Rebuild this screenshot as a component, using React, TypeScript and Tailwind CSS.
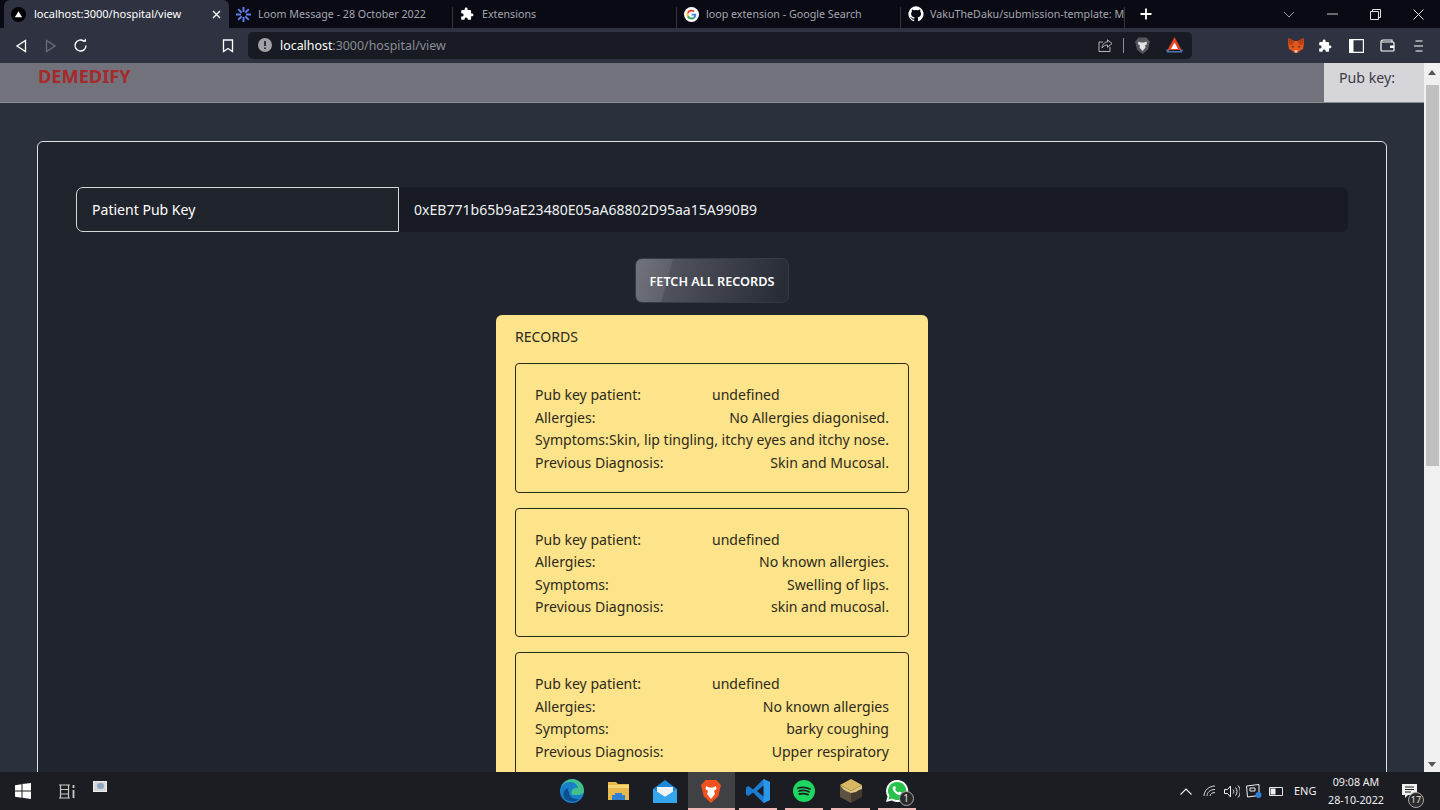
import React from "react";

const font = "font-['Noto_Sans','Open_Sans',sans-serif]";

function Tab({ icon, title, active, width, sep }: { icon: React.ReactNode; title: string; active?: boolean; width: string; sep?: boolean }) {
  return (
    <div className={`${width} h-[28px] flex items-center shrink-0 relative ${active ? "bg-[#2f3341] rounded-t-md" : ""}`}>
      <div className="w-[29px] pl-[7px] shrink-0 flex items-center">{icon}</div>
      <span className={`whitespace-nowrap overflow-hidden flex-1 ${active ? "text-[11px] pl-[1px] text-white" : "text-[10.7px] text-[#a4a7ae]"}`}>{title}</span>
      {active && <span className="w-[26px] shrink-0 flex justify-center">
        <svg width="9" height="9" viewBox="0 0 9 9" stroke="white" strokeWidth="1.4"><path d="M1 1l7 7M8 1l-7 7" /></svg>
      </span>}
      {sep && <span className="absolute right-0 top-[7px] h-[21px] w-px bg-[#34363f]" />}
    </div>
  );
}

function Record({ rows }: { rows: [string, string][] }) {
  return (
    <div className="border border-[#2c2a1c] rounded-[4px] px-[19px] pt-[20px] text-[14.05px] leading-[22.5px] text-[#2d2a1a] mb-[15px] h-[129.5px] shrink-0">
      {rows.map(([a, b], i) => (
        <div key={i} className="flex justify-between whitespace-nowrap">
          <span>{a}</span>
          {i === 0 ? <span className="w-[177px] text-left">{b}</span> : <span>{b}</span>}
        </div>
      ))}
    </div>
  );
}

function TaskIcon({ children, active, line = true }: { children: React.ReactNode; active?: boolean; line?: boolean }) {
  return (
    <div className={`w-[46.4px] h-[38px] flex items-center justify-center relative ${active ? "bg-[#3f4145]" : ""}`}>
      {children}
      {line && <span className={`absolute bottom-0 h-[2px] bg-[#f2b8b8] ${active ? "left-0 right-0" : "left-[4px] right-[4px]"}`} />}
    </div>
  );
}

const puzzle = "M20.5 11H19V7a2 2 0 0 0-2-2h-4V3.5a2.5 2.5 0 0 0-5 0V5H4a2 2 0 0 0-2 2v3.8h1.5a2.7 2.7 0 0 1 0 5.4H2V20a2 2 0 0 0 2 2h3.8v-1.5a2.7 2.7 0 0 1 5.4 0V22H17a2 2 0 0 0 2-2v-4h1.5a2.5 2.5 0 0 0 0-5z";

export default function App() {
  return (
    <div className={`w-[1440px] h-[810px] flex flex-col overflow-hidden bg-[#2a303c] ${font}`}>
      {/* Tab strip */}
      <div className="h-[28px] bg-[#0a0a14] flex items-center pl-[4px] shrink-0">
        <Tab
          active
          width="w-[225px]"
          title="localhost:3000/hospital/view"
          icon={<svg width="15" height="15" viewBox="0 0 15 15"><circle cx="7.5" cy="7.5" r="7.5" fill="#000" /><path d="M7.5 4.2l3.6 6H3.900z" fill="#fff" /></svg>}
        />
        <Tab
          width="w-[224px]"
          sep
          title="Loom Message - 28 October 2022"
          icon={<svg width="15" height="15" viewBox="0 0 15 15" fill="none" stroke="#5f80ea" strokeWidth="1.900"><path d="M7.500 0v5M7.500 10v5M0 7.500h5M10 7.500h5M2.200 2.200l3.500 3.500M9.300 9.300l3.500 3.500M12.800 2.200L9.300 5.700M5.700 9.300l-3.500 3.500" /></svg>}
        />
        <Tab
          width="w-[224px]"
          sep
          title="Extensions"
          icon={<svg width="14" height="14" viewBox="0 0 24 24" fill="#fff"><path d={puzzle} /></svg>}
        />
        <Tab
          width="w-[224px]"
          sep
          title="loop extension - Google Search"
          icon={<svg width="15" height="15" viewBox="0 0 24 24"><circle cx="12" cy="12" r="12" fill="#fff" /><path d="M19.600 12.200c0-.6 0-1.100-.2-1.600H12v3h4.300a3.700 3.700 0 0 1-1.600 2.400l2.500 2c1.500-1.400 2.400-3.400 2.400-5.800z" fill="#4285f4" /><path d="M12 20c2.200 0 4-.7 5.200-2l-2.500-2c-.7.500-1.600.8-2.700.8-2.100 0-3.900-1.400-4.500-3.300L4.900 15.500C6.200 18.200 8.900 20 12 20z" fill="#34a853" /><path d="M7.500 13.500a4.800 4.800 0 0 1 0-3L4.900 8.500a8 8 0 0 0 0 7z" fill="#fbbc05" /><path d="M12 7.200c1.200 0 2.200.4 3 1.200l2.200-2.200A8 8 0 0 0 4.900 8.500l2.600 2c.6-1.900 2.400-3.300 4.500-3.300z" fill="#ea4335" /></svg>}
        />
        <Tab
          width="w-[224px]"
          sep
          title="VakuTheDaku/submission-template: M"
          icon={<svg width="16" height="16" viewBox="0 0 24 24" fill="#fff"><path d="M12 .5a11.500 11.500 0 0 0-3.600 22.400c.6.100.8-.3.800-.6v-2c-3.200.7-3.900-1.500-3.900-1.500-.5-1.300-1.300-1.700-1.300-1.700-1-.7.100-.7.100-.7 1.200.1 1.800 1.200 1.800 1.200 1 1.800 2.700 1.300 3.400 1 .1-.8.400-1.300.7-1.600-2.600-.3-5.300-1.300-5.300-5.700 0-1.300.5-2.300 1.200-3.100-.1-.3-.5-1.500.1-3.100 0 0 1-.3 3.200 1.200a11 11 0 0 1 5.800 0c2.200-1.500 3.200-1.200 3.200-1.200.6 1.600.2 2.800.1 3.100.8.800 1.200 1.900 1.200 3.100 0 4.400-2.700 5.400-5.300 5.700.4.400.8 1 .8 2.100v3.100c0 .3.2.7.800.6A11.500 11.500 0 0 0 12 .5z" /></svg>}
        />
        <svg className="ml-[14px]" width="14" height="14" viewBox="0 0 14 14" stroke="#fff" strokeWidth="1.800"><path d="M7 1.500v11M1.500 7h11" /></svg>
        <div className="ml-auto flex items-center h-full">
          <span className="w-[42px] flex justify-center"><svg width="12" height="7" viewBox="0 0 12 7" fill="none" stroke="#9a9aa2"><path d="M1 1l5 5 5-5" /></svg></span>
          <span className="w-[44px] flex justify-center"><svg width="11" height="2" viewBox="0 0 11 2"><path d="M0 1h11" stroke="#c9c9cc" /></svg></span>
          <span className="w-[42px] flex justify-center"><svg width="11" height="11" viewBox="0 0 11 11" fill="none" stroke="#e2e2e4"><path d="M.5 2.500h8v8h-8zM2.500 2.500v-2h8v8h-2" /></svg></span>
          <span className="w-[44px] flex justify-center"><svg width="11" height="11" viewBox="0 0 11 11" stroke="#e2e2e4"><path d="M.5.500l10 10M10.500.500l-10 10" /></svg></span>
        </div>
      </div>

      {/* Toolbar */}
      <div className="h-[35px] bg-[#2f3341] flex items-center shrink-0">
        <div className="w-[248px] flex items-center h-full shrink-0 relative">
          <svg className="ml-[15px]" width="12" height="14" viewBox="0 0 12 14" fill="none" stroke="#fff" strokeWidth="1.300"><path d="M10.500 1.500v11L2 7z" /></svg>
          <svg className="ml-[18px]" width="12" height="14" viewBox="0 0 12 14" fill="none" stroke="#6b6e79" strokeWidth="1.300"><path d="M1.500 1.500v11L10 7z" /></svg>
          <svg className="ml-[16px]" width="15" height="15" viewBox="0 0 15 15" fill="none" stroke="#fff" strokeWidth="1.400"><path d="M13 7.500A5.500 5.500 0 1 1 11 3.300" /><path d="M9.500 3.800h3.500V.500z" fill="#fff" stroke="none" /></svg>
          <svg className="absolute left-[222px]" width="12" height="14" viewBox="0 0 12 14" fill="none" stroke="#fff" strokeWidth="1.300"><path d="M1.500 1h9v11.500L6 9.500l-4.500 3z" /></svg>
        </div>
        <div className="w-[944px] h-[27px] bg-[#181b23] rounded-[5px] flex items-center shrink-0 mb-[1px]">
          <svg className="ml-[10px]" width="14" height="14" viewBox="0 0 14 14"><circle cx="7" cy="7" r="7" fill="#a0a2a8" /><path d="M7 3v5M7 9.500v1.500" stroke="#181b23" strokeWidth="1.600" /></svg>
          <span className="ml-[8px] mt-[2px] text-[12.4px] text-white">localhost<span className="text-[#8b8d93]">:3000/hospital/view</span></span>
          <div className="ml-auto flex items-center">
            <svg width="15" height="13" viewBox="0 0 15 13" fill="none" stroke="#b5b6bb"><path d="M12 8v4.500H1V3h4" /><path d="M14 4.500L9.500.800v2.200C6 3 4.500 5.500 4 9c1.500-2.200 3-3 5.500-3v2.300z" /></svg>
            <span className="w-px h-[15px] bg-[#8d8f96] ml-[10px] mr-[11px]" />
            <svg width="15" height="17" viewBox="0 0 15 17"><path d="M3.500.500h8L13.500 3l1.500 1.500-1 3.500-1 4.500-5.500 4.500L2 12.500 1 8 0 4.500 1.500 3z" fill="#55575f" /><path d="M3.500 4.500L6 5.500h3l2.500-1 .5 2.500-2 1.500.5 2-3 3.500-3-3.500.5-2-2-1.500z" fill="#e3e3e5" /></svg>
            <svg className="ml-[16px] mr-[9px]" width="17" height="16" viewBox="0 0 17 16"><path d="M8.500 0l7 13H1.500z" fill="#e8431f" /><path d="M8.500 5.500l3.500 6.500H5z" fill="#fff" /><path d="M0 12.500h3v1.500h11v-1.500h3L16 15.500H1z" fill="#4c76b0" /></svg>
          </div>
        </div>
        <div className="flex-1 flex items-center h-full pl-[96px]">
          <svg width="16" height="15" viewBox="0 0 16 15"><path d="M.5 0l5.500 3h4l5.500-3 .5 5-1 6-3.500 2-2 2H6.500l-2-2L1 11 0 5z" fill="#e2581a" /><path d="M.5 0L6 3 4.500 7 .5 6zM15.500 0L10 3l1.500 4 4-1z" fill="#b83f14" /><path d="M3.500 8l2.500.5L5 10zM12.500 8l-2.500.5 1 1.500z" fill="#2f2a25" /><path d="M6.500 12h3l-.5 2.500H7z" fill="#d9d2c4" /></svg>
          <svg className="ml-[14px]" width="14" height="14" viewBox="0 0 24 24" fill="#fff"><path d={puzzle} /></svg>
          <svg className="ml-[17px]" width="15" height="14" viewBox="0 0 15 14" fill="none" stroke="#fff" strokeWidth="1.200"><path d="M.6.600h13.800v12.800H.6z" /><path d="M1 1h3.500v12H1z" fill="#fff" stroke="none" /></svg>
          <svg className="ml-[16px]" width="15" height="13" viewBox="0 0 15 13" fill="none" stroke="#fff" strokeWidth="1.200"><path d="M12 3V1H3a2 2 0 0 0-2 2v8a1 1 0 0 0 1 1h11a1 1 0 0 0 1-1V4a1 1 0 0 0-1-1H2" /><path d="M10 6.500h4v2.500h-4z" fill="#fff" stroke="none" /></svg>
          <svg className="ml-[19px]" width="10" height="12" viewBox="0 0 10 12" stroke="#fff" strokeWidth="1.200"><path d="M1.500 1h7M0 6h9M1.500 11h7" /></svg>
        </div>
      </div>

      {/* Viewport */}
      <div className="flex-1 min-h-0 flex overflow-hidden">
        <div className="flex-1 min-w-0 flex flex-col overflow-hidden">
          <header className="h-[40px] shrink-0 bg-[#72727c] border-b border-[#8c8c94] flex justify-between">
            <span className="pl-[38px] text-[18.2px] leading-[27px] font-bold text-[#a52a2a]">DEMEDIFY</span>
            <div className="w-[100px] bg-[#d5d5da] pl-[15px] text-[#3b3b44] text-[14.2px] leading-[30px]">Pub key:</div>
          </header>
          <main className="flex-1 min-h-0 pl-[37px] pr-[37px] pt-[38px] overflow-hidden">
            <section className="border border-[#dfe0e3] rounded-[6px] bg-[#20242d] h-[800px] pl-[38px] pr-[38px] pt-[45px]">
              <div className="flex h-[45px]">
                <div className="w-[323px] h-full border border-[#d6d7da] rounded-l-[7px] flex items-center pl-[15px] text-[14.05px] text-white bg-[#20242d] shrink-0">Patient Pub Key</div>
                <div className="flex-1 bg-[#181b23] rounded-r-[7px] flex items-center pl-[15px] text-[14.05px] text-[#eef0f3]">0xEB771b65b9aE23480E05aA68802D95aa15A990B9</div>
              </div>
              <div className="flex justify-center mt-[26px]">
                <button className="w-[154px] h-[45px] pt-[2px] rounded-[7px] border border-[#363a45] text-[12.7px] font-semibold text-white bg-[linear-gradient(105deg,#71737d_0%,#5f616b_22%,#50525d_23%,#282c36_95%)]">FETCH ALL RECORDS</button>
              </div>
              <div className="w-[432px] mx-auto mt-[12px] bg-[#fde38a] rounded-t-[6px] px-[19px] pt-[10px] h-[600px] flex flex-col">
                <div className="text-[14.1px] leading-[24px] text-[#2d2a1a] mb-[14px]">RECORDS</div>
                <Record rows={[["Pub key patient:", "undefined"], ["Allergies:", "No Allergies diagonised."], ["Symptoms:", "Skin, lip tingling, itchy eyes and itchy nose."], ["Previous Diagnosis:", "Skin and Mucosal."]]} />
                <Record rows={[["Pub key patient:", "undefined"], ["Allergies:", "No known allergies."], ["Symptoms:", "Swelling of lips."], ["Previous Diagnosis:", "skin and mucosal."]]} />
                <Record rows={[["Pub key patient:", "undefined"], ["Allergies:", "No known allergies"], ["Symptoms:", "barky coughing"], ["Previous Diagnosis:", "Upper respiratory"]]} />
              </div>
            </section>
          </main>
        </div>
        <div className="w-[16px] shrink-0 bg-[#f0f0f0] flex flex-col items-center">
          <svg className="mt-[7px]" width="8" height="5" viewBox="0 0 8 5"><path d="M4 0l4 5H0z" fill="#555" /></svg>
          <div className="w-[13px] h-[381px] mt-[10px] bg-[#c0c0c0]" />
          <svg className="mt-auto mb-[5px]" width="8" height="5" viewBox="0 0 8 5"><path d="M4 5l4-5H0z" fill="#555" /></svg>
        </div>
      </div>

      {/* Taskbar */}
      <div className="h-[38px] shrink-0 bg-[#1b1d22] flex items-center relative">
        <svg className="ml-[15px]" width="16" height="16" viewBox="0 0 16 16" fill="#fff"><path d="M0 2.300l6.500-1v6.300H0zM7.500 1.100L16 0v7.600H7.500zM0 8.500h6.500v6.300l-6.500-1zM7.500 8.500H16V16l-8.500-1.200z" /></svg>
        <svg className="ml-[28px]" width="16" height="15" viewBox="0 0 16 15" stroke="#c9c9c9" fill="none" strokeWidth="1.200"><path d="M0 1h11M0 14h11M1.500 1v13M9.500 1v13M1.500 5.500h8M1.500 10h8" /><path d="M14.500 1v3M14.500 6v8" strokeWidth="1.800" /></svg>
        <div className="ml-[18px] mb-[10px] w-[14px] h-[11px] bg-[#d7d7d7] border border-[#eee] flex items-center justify-center"><span className="w-[7px] h-[6px] bg-[#8fa6c0] rounded-full" /></div>
        <div className="absolute left-[549px] top-0 flex">
          <TaskIcon line={false}>
            <svg width="24" height="24" viewBox="0 0 24 24"><circle cx="12" cy="12" r="12" fill="#1a7fc9" /><path d="M12 0a12 12 0 0 1 12 12c0 3-3 4-6 4H12a5 5 0 0 1 6-7C17 5 14 3 10 3 5 3 2 6 1 9a12 12 0 0 1 11-9z" fill="#41c08c" /><path d="M9 13c0 4 3 7 8 7l2 .5A12 12 0 0 1 5 20c-3-4-2-10 4-11-2 1-1 3 0 4z" fill="#0c4f8f" /></svg>
          </TaskIcon>
          <TaskIcon line={false}>
            <svg width="21" height="20" viewBox="0 0 21 20"><path d="M0 1h8l2 2h11v16H0z" fill="#e8b94d" /><path d="M0 4h21v3H0z" fill="#f7d774" /><path d="M7 12h7v2h3v5H4v-5h3z" fill="#2f7fd3" /></svg>
          </TaskIcon>
          <TaskIcon line={false}>
            <svg width="24" height="23" viewBox="0 0 24 23"><path d="M12 0l12 9v14H0V9z" fill="#1e88d8" /><path d="M4 7h16v5l-8 5-8-5z" fill="#f1f3f5" /><path d="M0 9l12 8 12-8v14H0z" fill="#35a6ee" /></svg>
          </TaskIcon>
          <TaskIcon active>
            <svg width="20" height="23" viewBox="0 0 20 23"><path d="M4.500 0h11L18 3l2 2-1 4-1.500 7-7.500 7-7.500-7L1 9 0 5l2-2z" fill="#f1501f" /><path d="M5 6l3 1.500h4L15 6l.5 3-2.500 2 1 3-4 5-4-5 1-3-2.500-2z" fill="#fff" /></svg>
          </TaskIcon>
          <TaskIcon>
            <svg width="24" height="24" viewBox="0 0 24 24"><path d="M17.500 0L24 3v18l-6.500 3L7 13.500 2.500 17 0 15.500V8.500L2.500 7 7 10.500z" fill="#1a7bd0" /><path d="M17.500 0L24 3v18l-6.500 3z" fill="#2a98e8" /><path d="M17.500 6.500L11 12l6.500 5.500z" fill="#1b1d22" /></svg>
          </TaskIcon>
          <TaskIcon>
            <svg width="22" height="22" viewBox="0 0 22 22"><circle cx="11" cy="11" r="11" fill="#1ed760" /><path d="M5 8c4-1 8-1 12 1M6 11c3-.8 7-.8 10 .8M6.500 14c3-.6 6-.5 8.500.6" stroke="#1b1d22" strokeWidth="1.800" fill="none" strokeLinecap="round" /></svg>
          </TaskIcon>
          <TaskIcon>
            <svg width="22" height="24" viewBox="0 0 22 24"><path d="M11 0l11 6-11 6L0 6z" fill="#d8b763" /><path d="M0 6l11 6v12L0 18z" fill="#5d5242" /><path d="M22 6l-11 6v12l11-6z" fill="#44392f" /><path d="M0 6l11 6 11-6v4l-3 1-3 2-5 1-5-2-3-2z" fill="#e0c479" /></svg>
          </TaskIcon>
          <TaskIcon>
            <svg width="24" height="24" viewBox="0 0 24 24"><path d="M12 1a11 11 0 0 0-9.500 16.500L1 23l5.700-1.500A11 11 0 1 0 12 1z" fill="#fff" /><path d="M12 3a9 9 0 0 0-7.600 13.800l-.9 3.600 3.700-1A9 9 0 1 0 12 3z" fill="#27c24c" /><path d="M8.500 7.500c-1.500 1-1 3 .5 5s3.500 3.500 5.500 3.500 2.500-2 2-2.500l-2-1-1 1c-1.500-.5-3-2-3.500-3.500l1-1-1-2z" fill="#fff" /></svg>
            <span className="absolute left-[25px] top-[19px] w-[15px] h-[15px] rounded-full border border-[#a9a9a9] bg-[#2a2a2a] text-[#e5e5e5] text-[10px] leading-[13px] text-center">1</span>
          </TaskIcon>
        </div>
        <div className="ml-auto flex items-center text-white h-full">
          <svg width="12" height="7" viewBox="0 0 12 7" fill="none" stroke="#f0f0f0" strokeWidth="1.100"><path d="M.5 6.500L6 1l5.500 5.500" /></svg>
          <svg className="ml-[11px]" width="13" height="12" viewBox="0 0 13 12" fill="none" stroke="#d8d8d8"><path d="M1 11C1 5.500 6 1 12 1M4 11c0-3.500 3-6.500 8-6.500M7 11c0-1.800 2-3.500 5-3.500" /></svg>
          <svg className="ml-[8px]" width="16" height="13" viewBox="0 0 16 13" fill="none" stroke="#f0f0f0"><path d="M.5 4.500h3l3-3.500v11l-3-3.500h-3zM9 4.500c1 1 1 3 0 4M11.500 2.500c2 2 2 6 0 8M14 .500c3 3.500 3 8.500 0 12" /></svg>
          <svg className="ml-[6px]" width="16" height="14" viewBox="0 0 16 14" fill="none" stroke="#f0f0f0"><path d="M.5 2L13 .500v11L1.500 13z" /><path d="M4 4h5v3H4z" /><circle cx="12.500" cy="11" r="3" fill="#2f7fd3" stroke="none" /></svg>
          <svg className="ml-[7px]" width="15" height="9" viewBox="0 0 15 9" fill="none" stroke="#e5e5e5"><path d="M.5.500h13v8H.500z" /><path d="M1.500 1.500h5v6h-5z" fill="#f0f0f0" stroke="none" /></svg>
          <span className="ml-[10px] text-[11px] text-[#f0f0f0] w-[28px]">ENG</span>
          <div className="w-[68px] text-[10.7px] leading-[18px] text-center text-[#eee] whitespace-nowrap">
            <div>09:08 AM</div>
            <div>28-10-2022</div>
          </div>
          <div className="w-[50px] pl-[12px] relative h-full flex items-center">
            <svg width="15" height="14" viewBox="0 0 15 14"><path d="M0 0h15v11H6l-3 3v-3H0z" fill="#f0f0f0" /><path d="M3 3h9M3 5.500h9M3 8h6" stroke="#1b1d22" /></svg>
            <span className="absolute left-[18px] top-[20px] w-[16px] h-[16px] rounded-full border border-[#a9a9a9] bg-[#2a2a2a] text-[#e5e5e5] text-[9px] leading-[14px] text-center">17</span>
          </div>
        </div>
      </div>
    </div>
  );
}
